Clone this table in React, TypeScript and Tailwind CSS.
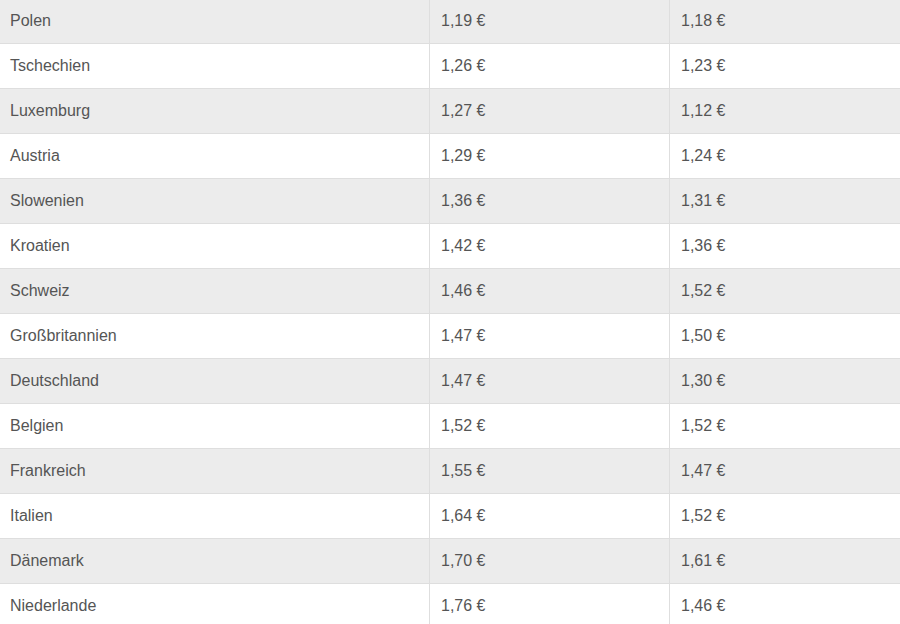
const rows: [string, string, string][] = [
  ['Polen', '1,19 €', '1,18 €'],
  ['Tschechien', '1,26 €', '1,23 €'],
  ['Luxemburg', '1,27 €', '1,12 €'],
  ['Austria', '1,29 €', '1,24 €'],
  ['Slowenien', '1,36 €', '1,31 €'],
  ['Kroatien', '1,42 €', '1,36 €'],
  ['Schweiz', '1,46 €', '1,52 €'],
  ['Großbritannien', '1,47 €', '1,50 €'],
  ['Deutschland', '1,47 €', '1,30 €'],
  ['Belgien', '1,52 €', '1,52 €'],
  ['Frankreich', '1,55 €', '1,47 €'],
  ['Italien', '1,64 €', '1,52 €'],
  ['Dänemark', '1,70 €', '1,61 €'],
  ['Niederlande', '1,76 €', '1,46 €'],
]

const App = () => {
  return (
    <div className="h-[624px] w-[900px] overflow-hidden bg-white font-['Liberation_Sans',Arial,sans-serif] text-[16px] text-[#555]">
      <div className="-mt-px">
        {rows.map((r, i) => (
          <div
            key={r[0]}
            className={`grid h-[45px] grid-cols-[429px_240px_1fr] border-b border-[#dedede] ${i % 2 === 0 ? 'bg-[#ececec]' : 'bg-white'}`}
          >
            <div className="flex items-center pl-[10px]">{r[0]}</div>
            <div className="flex items-center border-l border-[#dedede] pl-[11px]">{r[1]}</div>
            <div className="flex items-center border-l border-[#dedede] pl-[11px]">{r[2]}</div>
          </div>
        ))}
      </div>
    </div>
  )
}

export default App
